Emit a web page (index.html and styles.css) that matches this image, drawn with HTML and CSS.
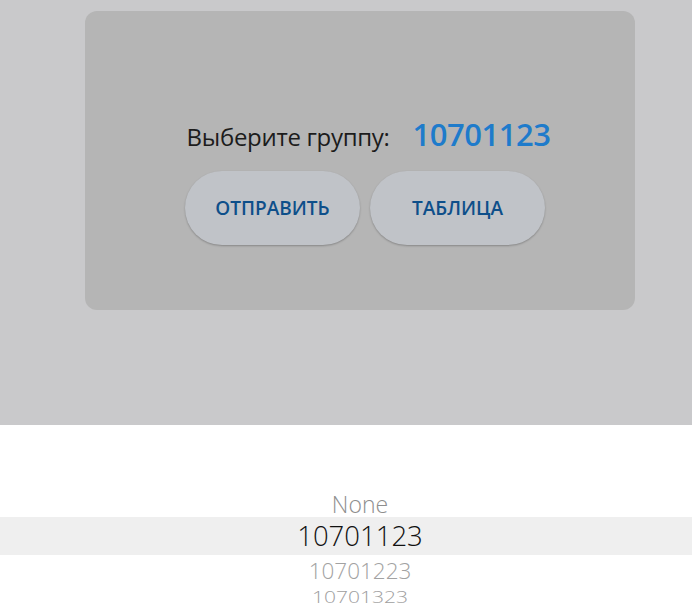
FILE: index.html
```html
<!DOCTYPE html>
<html lang="ru">
<head>
<meta charset="utf-8">
<link rel="stylesheet" href="styles.css">
</head>
<body>
<div class="overlay">
  <div class="card">
    <div class="row">
      <span class="label">Выберите группу:</span>
      <span class="value">10701123</span>
    </div>
    <div class="buttons">
      <button class="btn">Отправить</button>
      <button class="btn">Таблица</button>
    </div>
  </div>
</div>
<div class="picker">
  <div class="item item-prev">None</div>
  <div class="item item-sel">10701123</div>
  <div class="item item-next">10701223</div>
  <div class="item item-next2">10701323</div>
</div>
</body>
</html>
```
FILE: styles.css
```css
html, body {
  margin: 0;
  padding: 0;
  background: #ffffff;
  font-family: "Open Sans", "Noto Sans", sans-serif;
}
.overlay {
  height: 425px;
  background: #c9c9cb;
  padding-top: 11px;
  box-sizing: border-box;
}
.card {
  margin-left: 85px;
  width: 550px;
  height: 299px;
  background: #b5b5b5;
  border-radius: 12px;
  box-sizing: border-box;
  padding-top: 102px;
  display: flex;
  flex-direction: column;
  align-items: center;
}
.row {
  display: flex;
  align-items: baseline;
  gap: 23px;
  height: 47px;
  padding-left: 17px;
}
.label {
  font-size: 24px;
  color: #1c1c1c;
  letter-spacing: -0.3px;
}
.value {
  font-size: 31px;
  font-weight: 600;
  color: #1e7bcb;
  letter-spacing: -0.5px;
}
.buttons {
  display: flex;
  gap: 10px;
  margin-top: 11px;
  padding-left: 10px;
}
.btn {
  width: 175px;
  height: 74px;
  border: none;
  border-radius: 37px;
  background: #c0c3c8;
  box-shadow: 0 1px 2px rgba(0,0,0,0.25);
  font-family: "Open Sans", "Noto Sans", sans-serif;
  font-size: 19px;
  font-weight: 600;
  text-transform: uppercase;
  color: #0e4f8a;
  padding: 0;
}
.picker {
  padding-top: 67px;
  padding-left: 28px;
  display: flex;
  flex-direction: column;
  align-items: stretch;
  text-align: center;
}
.item {
  font-weight: 300;
  line-height: 1;
}
.item-prev {
  height: 25px;
  font-size: 23px;
  color: #8e8e8e;
  line-height: 25px;
}
.item-sel {
  height: 38px;
  line-height: 38px;
  background: #efefef;
  margin-left: -28px;
  padding-left: 28px;
  font-size: 27.5px;
  color: #111111;
}
.item-next {
  height: 32px;
  line-height: 32px;
  font-size: 22.5px;
  color: #a2a2a2;
}
.item-next2 {
  height: 20px;
  line-height: 20px;
  font-size: 21px;
  color: #9e9e9e;
  transform: scaleY(0.75);
}
```
